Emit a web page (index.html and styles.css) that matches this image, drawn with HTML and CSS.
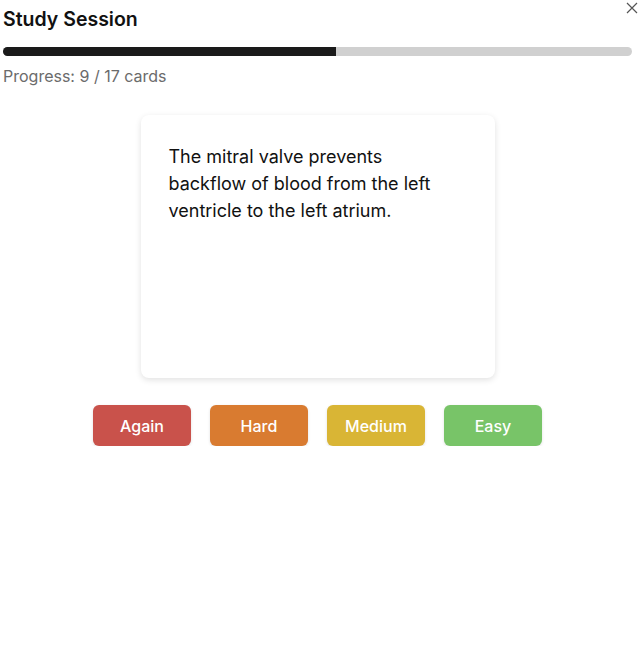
FILE: index.html
```html
<!DOCTYPE html>
<html lang="en">
<head>
<meta charset="utf-8">
<title>Study Session</title>
<link rel="stylesheet" href="styles.css">
</head>
<body>
<div class="modal">
  <button class="close" aria-label="Close">
    <svg width="12" height="12" viewBox="0 0 12 12"><path d="M1 1 L11 11 M11 1 L1 11" stroke="#555" stroke-width="1.2" fill="none"/></svg>
  </button>
  <h1 class="title">Study Session</h1>
  <div class="bar"><div class="bar-fill" style="width: 52.94%"></div></div>
  <p class="progress-text">Progress: 9 / 17 cards</p>
  <div class="card">
    <p class="card-text">The mitral valve prevents backflow of blood from the left ventricle to the left atrium.</p>
  </div>
  <div class="actions">
    <button class="btn again">Again</button>
    <button class="btn hard">Hard</button>
    <button class="btn medium">Medium</button>
    <button class="btn easy">Easy</button>
  </div>
</div>
</body>
</html>
```
FILE: styles.css
```css
html, body {
  margin: 0;
  padding: 0;
  background: #fff;
}
body {
  font-family: Inter, "Noto Sans", sans-serif;
  color: #111;
}
.modal {
  position: relative;
  padding: 7px 8px 0 3px;
}
.close {
  position: absolute;
  top: 1px;
  right: 1px;
  width: 14px;
  height: 14px;
  padding: 1px;
  border: none;
  background: none;
  display: flex;
  align-items: center;
  justify-content: center;
  cursor: pointer;
}
.title {
  margin: 0;
  font-size: 19.5px;
  font-weight: 600;
  line-height: 24px;
  color: #111;
}
.bar {
  margin-top: 16px;
  height: 9px;
  background: #d0d0d0;
  border-radius: 5px;
  overflow: hidden;
}
.bar-fill {
  height: 100%;
  background: #1a1a1a;
}
.progress-text {
  margin: 11px 0 0;
  font-size: 16px;
  line-height: 19px;
  color: #6b6b6b;
}
.card {
  box-sizing: border-box;
  width: 354px;
  height: 263px;
  margin: 29px auto 0;
  padding: 28px;
  background: #fff;
  border-radius: 8px;
  box-shadow: 0 2px 6px rgba(0, 0, 0, 0.12);
}
.card-text {
  margin: 0;
  max-width: 280px;
  font-size: 18px;
  line-height: 27px;
  color: #111;
}
.actions {
  display: flex;
  justify-content: center;
  gap: 19px;
  margin-top: 27px;
}
.btn {
  width: 98px;
  height: 41px;
  border: none;
  border-radius: 6px;
  color: #fff;
  font-family: Inter, "Noto Sans", sans-serif;
  font-size: 16px;
  font-weight: 500;
  box-shadow: 0 1px 3px rgba(0, 0, 0, 0.12);
  cursor: pointer;
}
.again { background: #c9524b; }
.hard { background: #d97b30; }
.medium { background: #d9b535; }
.easy { background: #78c468; }
```
